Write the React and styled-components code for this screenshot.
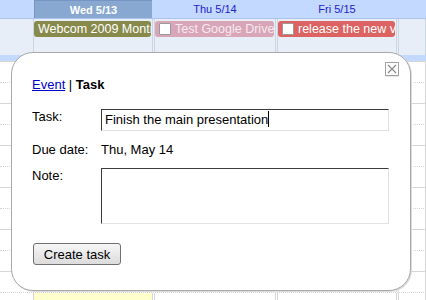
import React from "react";
import styled, { createGlobalStyle } from "styled-components";

const Global = createGlobalStyle`
  html, body { margin: 0; padding: 0; background: #fff; }
  body { font-family: "Liberation Sans", Arial, sans-serif; }
`;

const COLS = "32px 120px 122px 120px 1fr";

const Page = styled.div`
  position: relative;
  width: 426px;
  height: 300px;
  overflow: hidden;
  background: #fff;
`;

const HeaderRow = styled.div`
  display: grid;
  grid-template-columns: ${COLS};
  column-gap: 1px;
  height: 18px;
  background: #c3d9ff;
  border-bottom: 1px solid #adc4ea;
`;

const DayHead = styled.div`
  display: flex;
  align-items: center;
  justify-content: center;
  font-size: 11px;
  margin: 0 ${(p) => (p.$today ? "1px" : "0")};
  color: ${(p) => (p.$today ? "#ffffff" : "#2222cc")};
  font-weight: ${(p) => (p.$today ? "bold" : "normal")};
  background: ${(p) => (p.$today ? "#88a8d2" : "transparent")};
  border-left: ${(p) => (p.$today ? "1px solid #7595c2" : "none")};
  border-top: ${(p) => (p.$today ? "1px solid #7595c2" : "none")};
`;

const Gutter = styled.div``;

const AllDayRow = styled.div`
  display: grid;
  grid-template-columns: ${COLS};
  column-gap: 1px;
  height: 36px;
  background: #e8eef7;
`;

const AllDayCell = styled.div`
  border-left: 1px solid #cdd5e0;
  border-right: 1px solid #cdd5e0;
  padding: 2px 1px 0 0;
  overflow: hidden;
`;

const Chip = styled.div`
  display: flex;
  align-items: center;
  height: 16px;
  border-radius: 3px;
  padding-left: 4px;
  background: ${(p) => p.$bg};
  color: ${(p) => p.$fg};
  font-size: 12.5px;
  white-space: nowrap;
  overflow: hidden;
`;

const ChipBox = styled.span`
  flex: none;
  width: 10px;
  height: 10px;
  margin-right: 4px;
  background: #fff;
  border: 1px solid #9a9a9a;
  border-radius: 1px;
`;

const Band = styled.div`
  height: 6px;
  background: #c3d9ff;
`;

const TimeRow = styled.div`
  display: grid;
  grid-template-columns: ${COLS};
  column-gap: 1px;
  height: 21px;
  box-sizing: border-box;
  border-top: 1px ${(p) => (p.$dotted ? "dotted" : "solid")} #d6d6d6;
`;

const Slot = styled.div`
  border-left: 1px solid #d6d6d6;
  border-right: 1px solid #d6d6d6;
  background: ${(p) => (p.$today ? "#ffffcc" : "#ffffff")};
`;

const Popup = styled.div`
  position: absolute;
  left: 11px;
  top: 52px;
  width: 400px;
  height: 239px;
  box-sizing: border-box;
  padding: 24px 20px 0;
  background: #fff;
  border: 1px solid #a8a8a8;
  border-radius: 22px;
  box-shadow: 1px 1px 0 #dcdcdc;
  font-size: 13px;
  line-height: 15px;
  color: #000;
`;

const Close = styled.div`
  position: absolute;
  top: 9px;
  right: 11px;
  width: 14px;
  height: 14px;
  box-sizing: border-box;
  border: 1px solid #a0a0a0;
  background: #fff;
  box-shadow: 0 2px 0 -1px #e4e4e4;
  display: flex;
  align-items: center;
  justify-content: center;
`;

const Title = styled.div`
  margin-bottom: 17px;
`;

const Link = styled.a`
  color: #0000cc;
  text-decoration: underline;
  cursor: pointer;
`;

const Strong = styled.b`
  font-weight: bold;
`;

const Form = styled.div`
  display: grid;
  grid-template-columns: 69px 288px;
  grid-template-rows: 33px 26px 56px;
`;

const Label = styled.div`
  align-self: start;
`;

const Value = styled.div`
  align-self: start;
`;

const Field = styled.div`
  box-sizing: border-box;
  height: ${(p) => p.$h}px;
  border: 1px solid;
  border-color: #3c3c3c #e2e2e2 #e2e2e2 #3c3c3c;
  padding: 0 3px;
  line-height: 20px;
  white-space: nowrap;
  overflow: hidden;
  background: #fff;
`;

const Caret = styled.span`
  display: inline-block;
  width: 1px;
  height: 16px;
  background: #000;
  vertical-align: -3px;
`;

const Button = styled.button`
  margin: 19px 0 0 1px;
  width: 88px;
  height: 22px;
  box-sizing: border-box;
  padding: 0;
  font-family: "Liberation Sans", Arial, sans-serif;
  font-size: 13px;
  color: #000;
  background: linear-gradient(#f6f6f6, #dcdcdc);
  border: 1px solid #707070;
  border-radius: 3px;
`;

const rows = Array.from({ length: 12 }, (_, i) => i);

export default function App() {
  return (
    <Page>
      <Global />
      <HeaderRow>
        <Gutter />
        <DayHead $today>Wed 5/13</DayHead>
        <DayHead>Thu 5/14</DayHead>
        <DayHead>Fri 5/15</DayHead>
        <DayHead />
      </HeaderRow>
      <AllDayRow>
        <Gutter />
        <AllDayCell>
          <Chip $bg="#888a4c" $fg="#ffffff">Webcom 2009 Montreal</Chip>
        </AllDayCell>
        <AllDayCell>
          <Chip $bg="#d8a6b8" $fg="#f6eaee">
            <ChipBox />
            Test Google Drive
          </Chip>
        </AllDayCell>
        <AllDayCell>
          <Chip $bg="#dd6262" $fg="#ffffff">
            <ChipBox />
            release the new version
          </Chip>
        </AllDayCell>
        <AllDayCell />
      </AllDayRow>
      <Band />
      {rows.map((i) => (
        <TimeRow key={i} $dotted={i % 2 === 1}>
          <Gutter />
          <Slot $today />
          <Slot />
          <Slot />
          <Slot />
        </TimeRow>
      ))}
      <Popup>
        <Close>
          <svg width="10" height="10" viewBox="0 0 10 10">
            <path d="M1 1L9 9M9 1L1 9" stroke="#8a8a8a" strokeWidth="1.2" />
          </svg>
        </Close>
        <Title>
          <Link>Event</Link> | <Strong>Task</Strong>
        </Title>
        <Form>
          <Label>Task:</Label>
          <Value>
            <Field $h={22}>
              Finish the main presentation
              <Caret />
            </Field>
          </Value>
          <Label>Due date:</Label>
          <Value>Thu, May 14</Value>
          <Label>Note:</Label>
          <Value>
            <Field $h={56} />
          </Value>
        </Form>
        <Button>Create task</Button>
      </Popup>
    </Page>
  );
}
